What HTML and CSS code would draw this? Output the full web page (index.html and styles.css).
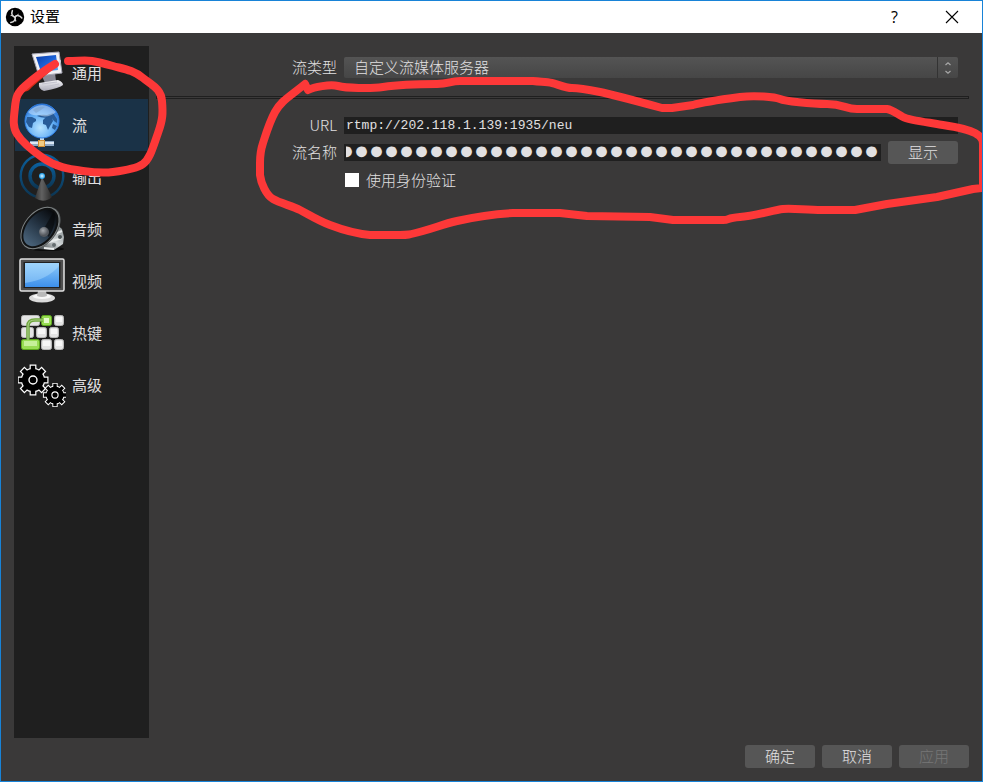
FILE: index.html
```html
<!DOCTYPE html>
<html lang="zh-CN">
<head>
<meta charset="utf-8">
<title>设置</title>
<link rel="stylesheet" href="styles.css">
</head>
<body>
<div class="window">
  <header class="titlebar">
    <svg class="logo" viewBox="0 0 20 20" aria-hidden="true">
      <circle cx="10" cy="10" r="9.2" fill="#000"/>
      <g fill="none" stroke="#d8d8d8" stroke-width="1.5" stroke-linecap="round">
        <path d="M10 10.2C7.2 9.2 6 6.8 7.4 3.6"/>
        <path d="M10 10.2C7.2 9.2 6 6.8 7.4 3.6" transform="rotate(120 10 10)"/>
        <path d="M10 10.2C7.2 9.2 6 6.8 7.4 3.6" transform="rotate(240 10 10)"/>
      </g>
      <g fill="none" stroke="#d8d8d8" stroke-width="1">
        <path d="M9.8 9.5C11.6 9.3 12.9 8.4 13.3 6.8"/>
        <path d="M9.8 9.5C11.6 9.3 12.9 8.4 13.3 6.8" transform="rotate(120 10 10)"/>
        <path d="M9.8 9.5C11.6 9.3 12.9 8.4 13.3 6.8" transform="rotate(240 10 10)"/>
      </g>
    </svg>
    <h1 class="title">设置</h1>
    <button class="caption-button" type="button" aria-label="帮助">?</button>
    <button class="caption-button" type="button" aria-label="关闭">
      <svg class="close" viewBox="0 0 14 14" aria-hidden="true"><path d="M1 1L13 13M13 1L1 13" stroke="#000" stroke-width="1.1"/></svg>
    </button>
  </header>

  <div class="content">
    <nav class="sidebar">
      <a class="item" href="#general">
        <svg class="icon" viewBox="0 0 48 48" aria-hidden="true">
          <defs>
            <linearGradient id="scr" x1="0" y1="0" x2="1" y2="1"><stop offset="0" stop-color="#0a3da8"/><stop offset=".5" stop-color="#1b62d8"/><stop offset="1" stop-color="#5fb0f5"/></linearGradient>
            <linearGradient id="silver" x1="0" y1="0" x2="0" y2="1"><stop offset="0" stop-color="#f4f4f8"/><stop offset="1" stop-color="#a9a9b6"/></linearGradient>
          </defs>
          <path d="M23 25L37 24L38 32L27 34Z" fill="#8b8b98"/>
          <path d="M21 34L40 31Q45 33 45 36Q42 39 26 42Q20 40 21 34Z" fill="url(#silver)"/>
          <path d="M24 35L39 33M26 38L41 35" stroke="#c3c3cf"/>
          <path d="M14 5L41 3L44 24L21 27Z" fill="#f1f1f5" stroke="#a6a6b4"/>
          <path d="M18 8L38 6L40 21L23 23Z" fill="url(#scr)"/>
          <path d="M38 14L43 11L42 15L37 17Z" fill="#dfe5ea"/>
          <path d="M34 17L39 12" stroke="#e8ecef" stroke-width="3"/>
          <path d="M5 42Q6 37 12 33L33 17L35 20L14 38Q9 44 5 42Z" fill="#d42b16"/>
        </svg>
        通用</a>
      <a class="item selected" href="#stream" aria-current="page">
        <svg class="icon" viewBox="0 0 48 48" aria-hidden="true">
          <defs><radialGradient id="globe" cx=".45" cy=".7" r=".75"><stop offset="0" stop-color="#b8e4ff"/><stop offset=".55" stop-color="#5eabf4"/><stop offset="1" stop-color="#1a60c8"/></radialGradient></defs>
          <rect x="22" y="35" width="4" height="7" fill="#c9dce9"/>
          <rect x="12" y="40" width="24" height="5" fill="#8ea8c4"/><rect x="12" y="41" width="24" height="2" fill="#dce9f4"/>
          <rect x="20.500" y="39.500" width="6" height="6" fill="#f1cd83" stroke="#cf8e33"/>
          <circle cx="24" cy="20" r="17" fill="url(#globe)" stroke="#2f7fe6"/>
          <g fill="#275b98">
            <path d="M9 16L14 16L18 18L18 20L15 22L14 27L11 26L8 21Z"/>
            <path d="M25 19L28 16L34 16L35 20L32 25L30 29L28 24L25 23Z"/>
            <path d="M19 15Q23 13 29 14L35 12L39 18L39 22L36 20L33 16Q25 18 19 15Z"/>
            <path d="M35 23L39 25L37 29L34 27Z"/>
            <path d="M15 9Q20 5 27 6L23 9L18 12Z" opacity=".6"/>
          </g>
          <path d="M10 11Q24 -3 38 11Q30 18 20 14Q14 15 10 11Z" fill="#d8ecff" opacity=".5"/>
        </svg>
        流</a>
      <a class="item" href="#output">
        <svg class="icon" viewBox="0 0 48 48" aria-hidden="true">
          <defs>
            <linearGradient id="ring" x1="0" y1="0" x2="0" y2="1"><stop offset="0" stop-color="#0b5f9c"/><stop offset="1" stop-color="#0c3552"/></linearGradient>
            <linearGradient id="cone" x1="0" y1="0" x2="1" y2="0"><stop offset="0" stop-color="#333"/><stop offset=".4" stop-color="#616161"/><stop offset="1" stop-color="#292929"/></linearGradient>
            <radialGradient id="dot"><stop offset="0" stop-color="#dff5ff"/><stop offset="1" stop-color="#1598e8"/></radialGradient>
          </defs>
          <g fill="none" stroke="url(#ring)"><circle cx="24" cy="23" r="21.300" stroke-width="2.400"/><circle cx="24" cy="23" r="12" stroke-width="3.400"/></g>
          <path d="M24 24L34 44Q26 51 17 45Z" fill="url(#cone)"/>
          <circle cx="24" cy="23" r="3" fill="url(#dot)"/>
        </svg>
        输出</a>
      <a class="item" href="#audio">
        <svg class="icon" viewBox="0 0 48 48" aria-hidden="true">
          <defs>
            <linearGradient id="spk" x1="1" y1="0" x2="0" y2="0"><stop offset="0" stop-color="#080a0d"/><stop offset=".5" stop-color="#263646"/><stop offset="1" stop-color="#4b657c"/></linearGradient>
            <linearGradient id="body" x1="0" y1="1" x2="1" y2="0"><stop offset="0" stop-color="#30373a"/><stop offset=".5" stop-color="#d4d9da"/><stop offset="1" stop-color="#777f82"/></linearGradient>
            <radialGradient id="dome" cx=".4" cy=".35"><stop offset="0" stop-color="#a4a8ad"/><stop offset="1" stop-color="#53575d"/></radialGradient>
          </defs>
          <ellipse cx="29" cy="44" rx="17" ry="2" fill="#0b0b0b"/>
          <path d="M38 19L44 24L46 32L45 39L36 45L20 44Z" fill="url(#body)"/>
          <path d="M32 31L44 26M28 38L44 33M26 43L36 44" stroke="#e8ecec" stroke-width="2"/>
          <circle cx="42" cy="32" r="2" fill="#4b5355"/><circle cx="36" cy="40" r="2" fill="#646c6e"/>
          <ellipse cx="23" cy="23" rx="24" ry="16" transform="rotate(-51 23 23)" fill="#55595b"/>
          <ellipse cx="22" cy="23" rx="23.500" ry="15.500" transform="rotate(-51 22 23)" fill="#101213" stroke="#7d8283"/>
          <ellipse cx="22" cy="23" rx="21" ry="13" transform="rotate(-51 22 23)" fill="url(#spk)"/>
          <path d="M24 27L36 6Q39 18 31 32Z" fill="#08090b" opacity=".65"/>
          <circle cx="26" cy="27" r="5" fill="url(#dome)"/>
        </svg>
        音频</a>
      <a class="item" href="#video">
        <svg class="icon" viewBox="0 0 48 48" aria-hidden="true">
          <defs><linearGradient id="lcd" x1="0" y1="0" x2="0" y2="1"><stop offset="0" stop-color="#8ecbfb"/><stop offset="1" stop-color="#3d8fea"/></linearGradient></defs>
          <ellipse cx="24" cy="41" rx="13" ry="4.5" fill="#dadada"/><ellipse cx="24" cy="39.5" rx="9" ry="2.5" fill="#f7f7f7"/>
          <path d="M20 34H28L29 39Q24 41 19 39Z" fill="#b9b9b9"/>
          <rect x="2" y="2" width="44" height="32" rx="1.5" fill="#4e4e4e" stroke="#e2e2e2" stroke-width="1.5"/>
          <rect x="5.500" y="5" width="37" height="26" fill="#202020"/>
          <rect x="7" y="6" width="34" height="24" fill="url(#lcd)"/>
          <path d="M7 6H41V9Q29 23 7 26Z" fill="#b9e3ff" opacity=".4"/>
        </svg>
        视频</a>
      <a class="item" href="#hotkeys">
        <svg class="icon" viewBox="0 0 48 48" aria-hidden="true">
          <g fill="#e4e4e4" stroke="#b9b9b9">
            <rect x="3.500" y="6.500" width="18" height="10" rx="2"/><rect x="36.500" y="6.500" width="9" height="10" rx="2"/>
            <rect x="3.500" y="18.500" width="12" height="10" rx="2"/><rect x="18.500" y="18.500" width="10" height="10" rx="2"/><rect x="31.500" y="18.500" width="9" height="10" rx="2"/>
            <rect x="23.500" y="30.500" width="10" height="10" rx="2"/><rect x="36.500" y="30.500" width="9" height="10" rx="2"/>
          </g>
          <g fill="#f7f7f7"><rect x="38" y="8" width="6" height="5"/><rect x="20" y="20" width="7" height="5"/><rect x="33" y="20" width="6" height="5"/><rect x="25" y="32" width="7" height="5"/><rect x="38" y="32" width="6" height="5"/></g>
          <g fill="#98dc54" stroke="#5daa1c"><rect x="23.500" y="6.500" width="10" height="10" rx="2"/><rect x="3.500" y="30.500" width="18" height="10" rx="2"/></g>
          <rect x="26" y="9" width="5" height="5" fill="#e3f9cb"/><rect x="6" y="32" width="13" height="5" fill="#c6f09a"/>
          <path d="M10 31V17Q10 11 17 11H25" fill="none" stroke="#6da53b" stroke-width="3.500"/><path d="M10 31V17Q10 11 17 11H25" fill="none" stroke="#a9cf86" stroke-width="1.200"/>
        </svg>
        热键</a>
      <a class="item" href="#advanced">
        <svg class="icon" viewBox="0 0 48 48" aria-hidden="true">
          <defs>
            <path id="teeth-l" d="M0 -15.500V15.500M-15.500 0H15.500M-11 -11L11 11M11 -11L-11 11"/>
            <path id="teeth-s" d="M0 -14.300V14.300M-14.300 0H14.300M-10.100 -10.100L10.100 10.100M10.100 -10.100L-10.100 10.100"/>
            <g id="gear">
              <circle r="12.200" fill="#fff"/><use href="#teeth-l" stroke="#fff" stroke-width="6.800"/>
              <circle r="11" fill="#000"/><use href="#teeth-s" stroke="#000" stroke-width="4.400"/>
              <circle r="4" fill="#000" stroke="#fff" stroke-width="1.400"/>
            </g>
          </defs>
          <use href="#gear" transform="translate(15 19)"/>
          <use href="#gear" transform="translate(37 34) scale(.78)"/>
        </svg>
        高级</a>
    </nav>

    <main class="panel">
      <form class="form" id="settings">
        <div class="row">
          <label class="label" for="type">流类型</label>
          <div class="combo">
            <select id="type"><option>自定义流媒体服务器</option></select>
            <span class="spin"><svg viewBox="0 0 6 12" aria-hidden="true"><path d="M.5 3L3 .8L5.500 3M.5 9L3 11.200L5.500 9" fill="none" stroke="#a8a8a8" stroke-width="1.200"/></svg></span>
          </div>
        </div>
        <hr class="rule">
        <div class="row">
          <label class="label" for="url">URL</label>
          <input class="field url" id="url" type="text" value="rtmp://202.118.1.139:1935/neu">
        </div>
        <div class="row key-row">
          <label class="label" for="key">流名称</label>
          <input class="field key" id="key" type="text" autocomplete="off" value="●●●●●●●●●●●●●●●●●●●●●●●●●●●●●●●●●●●●">
          <button class="button" type="button">显示</button>
        </div>
        <div class="row check-row">
          <input class="check" id="auth" type="checkbox">
          <label for="auth">使用身份验证</label>
        </div>
      </form>
    </main>
  </div>

  <footer class="actions">
    <button class="button" type="submit" form="settings">确定</button>
    <button class="button" type="button">取消</button>
    <button class="button" type="button" disabled>应用</button>
  </footer>

  <svg class="markup" width="983" height="782" viewBox="0 0 983 782" aria-hidden="true">
    <path d="M55 64C45 70 33 79 25 86S16 97 15 107S12 126 17 134S30 149 43 158S68 169 83 171S105 173 113 172S136 169 143 164S153 147 158 133S163 113 162 101S153 86 143 78S124 69 113 66S98 62 92 61S78 61 68 61"/>
    <path d="M305 84L308 90C314 87 330 84 338 86S370 89 383 87S425 84 437 84S450 81 460 81H533C543 82 547 82 552 83S565 88 572 88S590 90 600 92S640 102 662 108H672L693 105C703 102 725 99 740 97S775 97 780 99S810 104 827 104S845 109 857 109H887C893 110 897 114 903 117S925 122 937 124S966 128 975 133S983 142 983 147V188L973 189L937 197L887 204L855 210H822C805 210 792 208 783 209S754 216 740 217S730 220 723 220H673L650 217L587 216L560 213H513C490 214 470 218 457 221S437 227 423 231S407 235 400 235H370C360 234 343 230 330 225S308 214 300 210S280 203 273 199S261 183 260 175V163C260 155 261 149 263 143S269 123 275 112S289 97 305 84"/>
  </svg>
</div>
</body>
</html>
```
FILE: styles.css
```css
* {
  box-sizing: border-box;
}

body {
  margin: 0;
  font: 300 15px/20px "Noto Sans CJK SC", sans-serif;
  color: #e1e0e1;
}

input,
select,
button {
  margin: 0;
  border: 0;
  font: inherit;
  color: inherit;
}

.window {
  position: relative;
  display: flex;
  flex-direction: column;
  min-height: 100vh;
  overflow: hidden;
  border: 1px solid #1883d7;
  background: #3a3939;
}

.titlebar {
  display: flex;
  align-items: center;
  height: 32px;
  padding-left: 4px;
  background: #fff;
  color: #000;
}

.logo {
  width: 20px;
  height: 20px;
}

.title {
  flex: 1;
  margin: 0 0 0 5px;
  padding-bottom: 2px;
  font: inherit;
  font-weight: 400;
}

.caption-button {
  display: grid;
  place-items: center;
  width: 57px;
  height: 32px;
  padding: 0;
  background: none;
  font-family: "Open Sans", sans-serif;
  font-size: 16px;
  font-weight: 400;
}

.close {
  width: 14px;
  height: 14px;
}

.titlebar .caption-button:last-child {
  margin-right: 2px;
}

.content {
  flex: 1;
  display: flex;
  padding: 13px 13px 0;
}

.sidebar {
  width: 135px;
  padding: 1px;
  background: #1f1f1f;
  font-weight: 400;
}

.item {
  display: flex;
  align-items: center;
  gap: 6px;
  height: 52px;
  padding-left: 3px;
  color: inherit;
  text-decoration: none;
}

.selected {
  background: #1a3247;
}

.icon {
  width: 48px;
  height: 48px;
}

.panel {
  flex: 1;
  padding: 11px 0 0 7px;
}

.form {
  display: flex;
  flex-direction: column;
}

.row {
  display: flex;
  align-items: center;
  gap: 7px;
  padding-right: 11px;
}

.label {
  width: 181px;
  padding-bottom: 1px;
  text-align: right;
}

.combo {
  position: relative;
  flex: 1;
  height: 21px;
}

.combo select {
  display: block;
  width: 100%;
  height: 100%;
  padding: 0 30px 2px 10px;
  border-radius: 2px;
  appearance: none;
  background: linear-gradient(#545454, #464646);
}

.spin {
  position: absolute;
  top: 0;
  right: 0;
  display: grid;
  place-items: center;
  width: 21px;
  height: 100%;
  border-left: 1px solid #333;
  pointer-events: none;
}

.spin svg {
  width: 6px;
  height: 12px;
}

.rule {
  width: 100%;
  height: 3px;
  margin: 18px 0 16px;
  border: 1px solid #1f1f1f;
}

.field {
  flex: 1;
  min-width: 0;
  height: 17px;
  padding: 0 2px;
  background: #1f1f1f;
  font-family: "Liberation Mono", monospace;
}

.url {
  font-size: 13px;
}

.key-row {
  margin-top: 5px;
}

.key {
  font-size: 25px;
  line-height: 17px;
  text-indent: -7px;
}

.button {
  width: 70px;
  height: 23px;
  padding: 0 0 2px;
  border-radius: 3px;
  background: #565656;
}

.button:disabled {
  color: #777;
}

.check-row {
  margin-top: 6px;
  padding-left: 189px;
}

.check {
  width: 14px;
  height: 14px;
  appearance: none;
  background: #fff;
}

.actions {
  display: flex;
  justify-content: flex-end;
  gap: 7px;
  padding: 7px 13px 13px;
}

.markup {
  position: absolute;
  top: -1px;
  left: -1px;
  pointer-events: none;
  fill: none;
  stroke: #fd3838;
  stroke-width: 8;
  stroke-linecap: round;
  stroke-linejoin: round;
}
```
